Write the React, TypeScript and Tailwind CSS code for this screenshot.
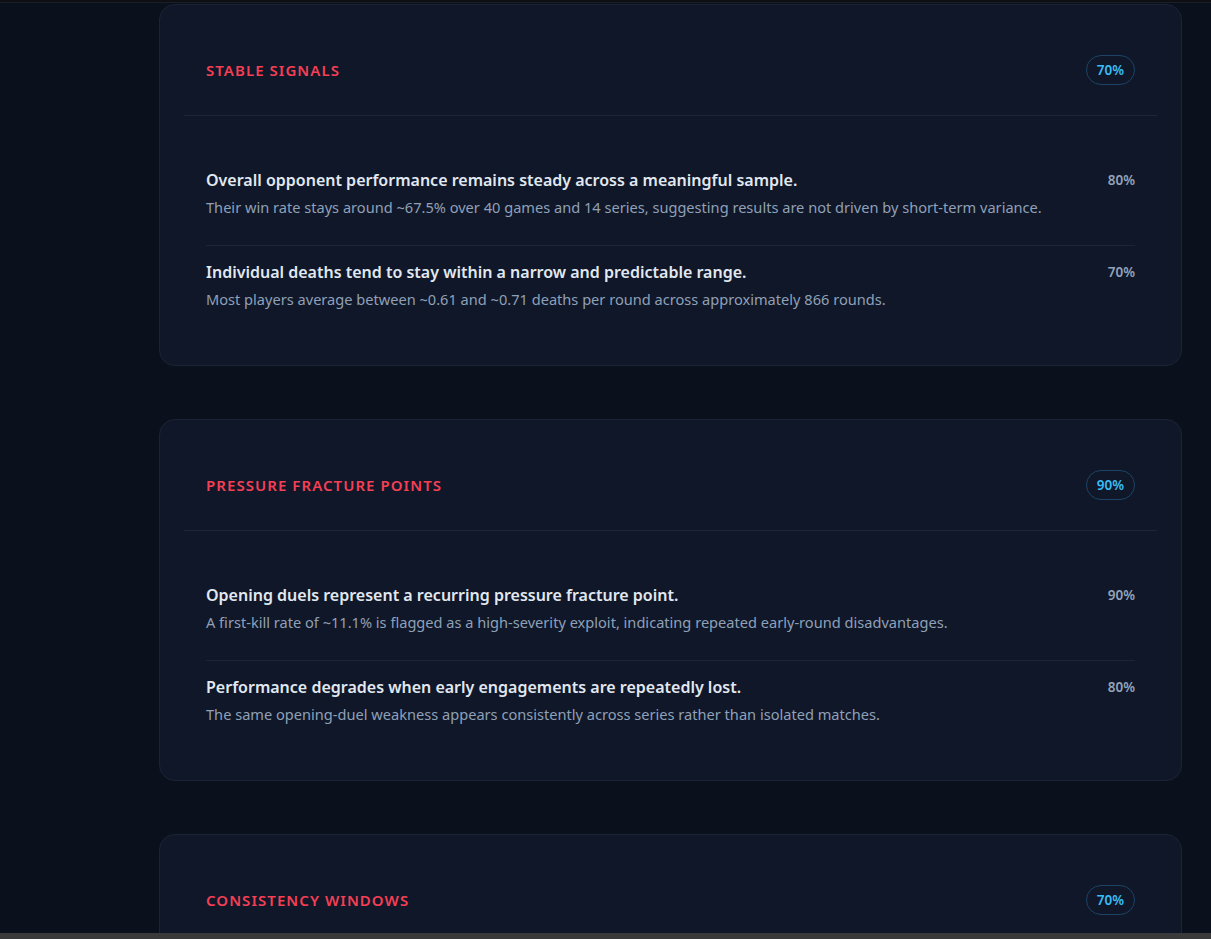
import React from 'react'

interface Signal {
  title: string
  detail: string
  pct: number
}

interface Section {
  label: string
  confidence: number
  items: Signal[]
}

const sections: Section[] = [
  {
    label: 'Stable Signals',
    confidence: 70,
    items: [
      {
        title: 'Overall opponent performance remains steady across a meaningful sample.',
        detail:
          'Their win rate stays around ~67.5% over 40 games and 14 series, suggesting results are not driven by short-term variance.',
        pct: 80,
      },
      {
        title: 'Individual deaths tend to stay within a narrow and predictable range.',
        detail: 'Most players average between ~0.61 and ~0.71 deaths per round across approximately 866 rounds.',
        pct: 70,
      },
    ],
  },
  {
    label: 'Pressure Fracture Points',
    confidence: 90,
    items: [
      {
        title: 'Opening duels represent a recurring pressure fracture point.',
        detail:
          'A first-kill rate of ~11.1% is flagged as a high-severity exploit, indicating repeated early-round disadvantages.',
        pct: 90,
      },
      {
        title: 'Performance degrades when early engagements are repeatedly lost.',
        detail: 'The same opening-duel weakness appears consistently across series rather than isolated matches.',
        pct: 80,
      },
    ],
  },
  {
    label: 'Consistency Windows',
    confidence: 70,
    items: [],
  },
]

function SectionCard({ section }: { section: Section }) {
  return (
    <div className="rounded-2xl border border-[#1b2436] bg-[#0f1729] px-6 pt-6 pb-7">
      {/* header */}
      <div className="flex items-center justify-between border-b border-[#1c2535] px-[22px] pt-[26px] pb-[30px]">
        <h3 className="text-[15px] font-semibold uppercase tracking-[0.07em] text-[#f43f55]">{section.label}</h3>
        <span className="flex h-[30px] items-center rounded-full border border-[#1d4466] px-[10px] text-[13.5px] font-semibold text-[#38bdf8]">
          {section.confidence}%
        </span>
      </div>

      {/* signals */}
      <div className="px-[22px] pt-[38px]">
        {section.items.map((item, index) => (
          <div
            key={index}
            className={`pt-[14px] pb-[27px] ${index < section.items.length - 1 ? 'border-b border-[#1c2535]' : ''}`}
          >
            <div className="flex items-start justify-between gap-6">
              <p className="text-[16px] leading-6 font-semibold text-[#e2e8f0]">{item.title}</p>
              <span className="text-[13.5px] leading-6 font-semibold text-[#94a3b8]">{item.pct}%</span>
            </div>
            <p className="mt-1 text-[14.6px] leading-[22px] text-[#8fa0b7]">{item.detail}</p>
          </div>
        ))}
      </div>
    </div>
  )
}

export default function App() {
  return (
    <div
      className="flex h-[939px] w-full flex-col overflow-hidden bg-[#0b111c]"
      style={{ fontFamily: '"Segoe UI", "Noto Sans", "Open Sans", sans-serif' }}
    >
      <div className="h-[3px] shrink-0 border-b border-[#1a1f27] bg-[#0d0f12]" />
      <div className="min-h-0 flex-1 overflow-hidden">
        <div className="ml-[159px] mr-[29px] mt-px space-y-[53px]">
          {sections.map((section) => (
            <SectionCard key={section.label} section={section} />
          ))}
        </div>
      </div>
      <div className="h-[6px] shrink-0 bg-[#3a3a3a]" />
    </div>
  )
}
